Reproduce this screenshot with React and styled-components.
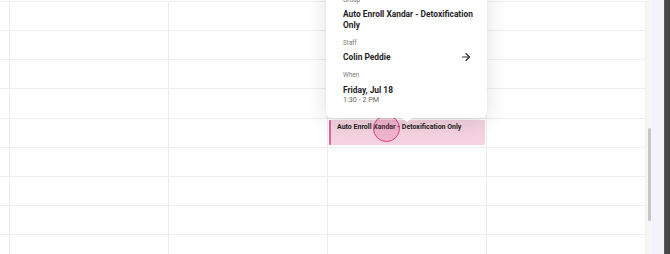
import React from "react";
import styled, { createGlobalStyle } from "styled-components";
import { ArrowRight } from "lucide-react";

const Global = createGlobalStyle`
  html, body { margin: 0; padding: 0; background: #ffffff; overflow: hidden; }
  body { font-family: Roboto, "Liberation Sans", Arial, sans-serif; }
`;

const Page = styled.div`
  display: flex;
  width: 670px;
  height: 254px;
  overflow: hidden;
`;

const Calendar = styled.div`
  display: grid;
  grid-template-columns: 10px repeat(4, 159px);
  padding-top: 1px;
  height: 253px;
  width: 646px;
  overflow: hidden;
`;

const Column = styled.div`
  position: relative;
  display: flex;
  flex-direction: column;
  border-right: 1px solid ${(p) => (p.$last ? "#f1f1f1" : "#ececec")};
`;

const Cell = styled.div`
  flex: 0 0 29.17px;
  box-sizing: border-box;
  border-top: 1px solid #eeeeee;
  padding: 1px 1px 2px 1px;
  display: flex;
`;

const EventBlock = styled.div`
  position: relative;
  flex: 1;
  box-sizing: border-box;
  background: #f5d3e0;
  border-left: 2px solid #e2679b;
  border-radius: 1px;
  padding: 2px 0 0 6px;
  font-size: 7px;
  line-height: 10px;
  font-weight: 700;
  color: #1c1c1c;
  white-space: nowrap;
`;

const TouchRing = styled.div`
  position: absolute;
  left: 42px;
  top: -5px;
  width: 27px;
  height: 27px;
  box-sizing: border-box;
  border-radius: 50%;
  border: 1.5px solid #de3f82;
  background: rgba(220, 70, 135, 0.2);
`;

const Popover = styled.div`
  position: absolute;
  left: -2px;
  top: -18px;
  width: 161px;
  box-sizing: border-box;
  padding: 12px 15px 13.5px 17px;
  background: #ffffff;
  border-radius: 0 0 6px 6px;
  box-shadow: 0 4px 22px rgba(0, 0, 0, 0.12), 0 1px 3px rgba(0, 0, 0, 0.04);
  display: flex;
  flex-direction: column;
  gap: 7px;
  z-index: 2;

  &::after {
    content: "";
    position: absolute;
    left: 76px;
    bottom: -4px;
    width: 0;
    height: 0;
    border-left: 5px solid transparent;
    border-right: 5px solid transparent;
    border-top: 4px solid #ffffff;
  }
`;

const Section = styled.div`
  display: flex;
  flex-direction: column;
`;

const Label = styled.div`
  font-size: 6.4px;
  line-height: 10px;
  color: #7a7a7a;
  margin-bottom: 3.2px;
`;

const Value = styled.div`
  display: flex;
  align-items: center;
  justify-content: space-between;
  font-size: 8.4px;
  line-height: 12px;
  font-weight: 700;
  color: #1f1f1f;
`;

const Title = styled.div`
  font-size: 8.4px;
  line-height: 11.3px;
  font-weight: 700;
  color: #1f1f1f;
  margin: 0.5px -5px 0 0;
`;

const Sub = styled.div`
  font-size: 7.2px;
  line-height: 10px;
  color: #666666;
  margin-top: -1px;
`;

const Scrollbar = styled.div`
  width: 6px;
  background: #f6f6f6;
  display: flex;
  justify-content: center;
`;

const Thumb = styled.div`
  margin-top: 128px;
  width: 3px;
  height: 93px;
  border-radius: 2px;
  background: #c6c6c6;
`;

const Gutter = styled.div`
  width: 12px;
  background: #f2f3fa;
`;

const Frame = styled.div`
  width: 6px;
  background: #474747;
  border-left: 1px solid #5a5a5a;
  box-sizing: border-box;
`;

const ROWS = 9;

function Rows({ children }) {
  return Array.from({ length: ROWS }, (_, i) => (
    <Cell key={i}>{children ? children(i) : null}</Cell>
  ));
}

export default function App() {
  return (
    <>
      <Global />
      <Page>
        <Calendar>
          <Column>
            <Rows />
          </Column>
          <Column>
            <Rows />
          </Column>
          <Column>
            <Rows />
          </Column>
          <Column>
            <Popover>
              <Section>
                <Label>Group</Label>
                <Title>Auto Enroll Xandar - Detoxification Only</Title>
              </Section>
              <Section>
                <Label>Staff</Label>
                <Value>
                  Colin Peddie
                  <ArrowRight size={12} strokeWidth={2.2} color="#2a2a2a" />
                </Value>
              </Section>
              <Section>
                <Label>When</Label>
                <Value>Friday, Jul 18</Value>
                <Sub>1:30 - 2 PM</Sub>
              </Section>
            </Popover>
            <Rows>
              {(i) =>
                i === 4 ? (
                  <EventBlock>
                    Auto Enroll Xandar - Detoxification Only
                    <TouchRing />
                  </EventBlock>
                ) : null
              }
            </Rows>
          </Column>
          <Column $last>
            <Rows />
          </Column>
        </Calendar>
        <Scrollbar>
          <Thumb />
        </Scrollbar>
        <Gutter />
        <Frame />
      </Page>
    </>
  );
}
